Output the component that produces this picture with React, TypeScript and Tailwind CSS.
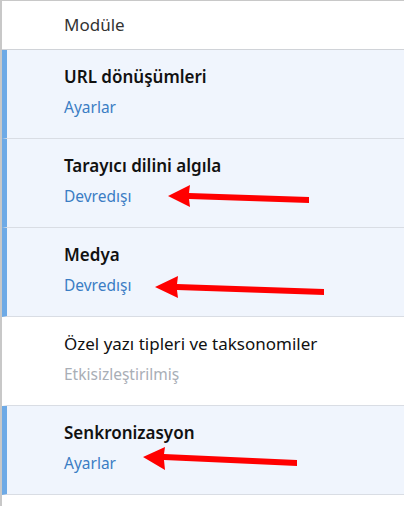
import React from "react";

type Row = { title: string; sub: string; kind: "link" | "off"; active: boolean; bold: boolean };

const rows: Row[] = [
  { title: "URL dönüşümleri", sub: "Ayarlar", kind: "link", active: true, bold: true },
  { title: "Tarayıcı dilini algıla", sub: "Devredışı", kind: "link", active: true, bold: true },
  { title: "Medya", sub: "Devredışı", kind: "link", active: true, bold: true },
  { title: "Özel yazı tipleri ve taksonomiler", sub: "Etkisizleştirilmiş", kind: "off", active: false, bold: false },
  { title: "Senkronizasyon", sub: "Ayarlar", kind: "link", active: true, bold: true },
];

function ModuleRow({ row }: { row: Row }) {
  return (
    <div
      className={
        "h-[89px] border-b border-[#d9dde4] border-l-[5px] pl-[57px] pt-[15px] flex flex-col gap-[6px] " +
        (row.active ? "bg-[#f0f5fd] border-l-[#6eaae6]" : "bg-white border-l-white")
      }
    >
      <div className={"text-[17px] leading-6 text-[#111] " + (row.bold ? "font-semibold" : "font-normal")}>{row.title}</div>
      <div className={"text-[15.5px] leading-6 " + (row.kind === "link" ? "text-[#3b7dc4]" : "text-[#a9aeb6]")}>{row.sub}</div>
    </div>
  );
}

function Arrows() {
  return (
    <svg className="absolute inset-0 pointer-events-none" width="404" height="506" viewBox="0 0 404 506">
      <g fill="#ff0000">
        <polygon points="168,196 190,185 189,193 309,197 309,203 189,199 190,207" />
        <polygon points="155,287 178,276 177,284 324,289 324,295 177,290 178,298" />
        <polygon points="143,457 165,447 164,454 297,460 297,466 164,460 165,470" />
      </g>
    </svg>
  );
}

export default function App() {
  return (
    <div className="relative w-[404px] h-[506px] bg-white overflow-hidden" style={{ fontFamily: '"Noto Sans", "Open Sans", sans-serif' }}>
      <div className="border-l-2 border-t border-[#c8c8c8] h-full">
        <div className="h-[49px] border-b border-[#d0d3d8] pl-[62px] flex items-center text-[17px] text-[#333]">Modüle</div>
        {rows.map((r) => (
          <ModuleRow key={r.title} row={r} />
        ))}
      </div>
      <Arrows />
    </div>
  );
}
